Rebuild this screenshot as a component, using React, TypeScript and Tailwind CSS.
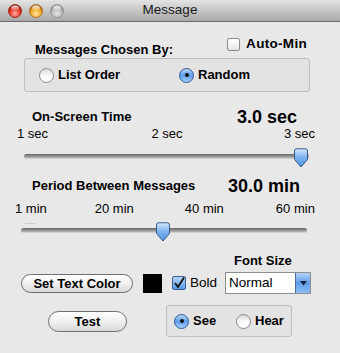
import React from "react";

const Light = ({ id, c1, c2, c3 }: { id: string; c1: string; c2: string; c3: string }) => (
  <svg width="14" height="14" viewBox="0 0 14 14">
    <defs>
      <radialGradient id={id} cx="50%" cy="70%" r="60%">
        <stop offset="0%" stopColor={c1} />
        <stop offset="70%" stopColor={c2} />
        <stop offset="100%" stopColor={c3} />
      </radialGradient>
      <linearGradient id={id + "g"} x1="0" y1="0" x2="0" y2="1">
        <stop offset="0%" stopColor="#fff" stopOpacity="0.9" />
        <stop offset="100%" stopColor="#fff" stopOpacity="0" />
      </linearGradient>
    </defs>
    <circle cx="7" cy="7" r="6.5" fill={`url(#${id})`} stroke={c3} strokeWidth="0.8" />
    <ellipse cx="7" cy="4.2" rx="4" ry="2.6" fill={`url(#${id + "g"})`} />
  </svg>
);

const Radio = ({ on }: { on?: boolean }) =>
  on ? (
    <span className="w-[15px] h-[15px] rounded-full border border-[#2c5a9a] bg-gradient-to-b from-[#b9d6f7] via-[#5d9ee8] to-[#a6d0fb] flex items-center justify-center shrink-0">
      <span className="w-[4px] h-[4px] rounded-full bg-[#111]" />
    </span>
  ) : (
    <span className="w-[15px] h-[15px] rounded-full border border-[#8a8a8a] bg-gradient-to-b from-[#d9d9d9] via-[#fafafa] to-[#ffffff] shrink-0" />
  );

const Thumb = () => (
  <svg width="16" height="20" viewBox="0 0 16 20">
    <defs>
      <linearGradient id="th" x1="0" y1="0" x2="0" y2="1">
        <stop offset="0%" stopColor="#d7e8fc" />
        <stop offset="45%" stopColor="#7fb4f0" />
        <stop offset="100%" stopColor="#4f93e3" />
      </linearGradient>
    </defs>
    <path d="M1.5 3 Q1.5 0.8 3.5 0.8 H12.5 Q14.5 0.8 14.5 3 V11.5 L8 19 L1.5 11.5 Z" fill="url(#th)" stroke="#38598a" strokeWidth="1" />
  </svg>
);

const Slider = ({ left, x0, x1 }: { left: number; x0: number; x1: number }) => (
  <div className="relative h-[20px]" style={{ marginLeft: x0, width: x1 - x0 }}>
    <div className="absolute left-0 right-0 top-[6px] h-[5px] rounded-full bg-gradient-to-b from-[#666] to-[#b8b8b8] border-b border-[#d0d0d0]" />
    <div className="absolute top-0" style={{ left }}>
      <Thumb />
    </div>
  </div>
);

export default function App() {
  return (
    <div className="w-[340px] h-[353px] bg-[#e8e8e8] font-['Liberation_Sans',Arial,sans-serif] text-black overflow-hidden">
      {/* title bar */}
      <div className="relative h-[22px] bg-gradient-to-b from-[#e4e4e4] to-[#a9a9a9] border-b border-[#6b6b6b] flex items-center justify-center">
        <div className="absolute left-[8px] top-[4px] flex gap-[7px]">
          <Light id="r" c1="#ffb0a8" c2="#e5301f" c3="#9a1a10" />
          <Light id="o" c1="#ffe9a0" c2="#f0a420" c3="#a8661a" />
          <Light id="g" c1="#e6e6e6" c2="#b8b8b8" c3="#8c8c8c" />
        </div>
        <span className="text-[13.5px] text-[#1a1a1a]">Message</span>
      </div>

      {/* messages chosen by */}
      <div className="mt-[14px] h-[22px] flex justify-between">
        <span className="mt-[6px] ml-[35px] text-[13px] leading-[16px] font-bold">Messages Chosen By:</span>
        <label className="mt-[1px] mr-[33px] h-[14px] flex items-center gap-[6px]">
          <span className="w-[13px] h-[13px] rounded-[2px] border border-[#8c8c8c] bg-gradient-to-b from-[#fff] to-[#e6e6e6]" />
          <span className="text-[13.5px] font-bold tracking-[0.3px]">Auto-Min</span>
        </label>
      </div>
      <div className="ml-[24px] w-[286px] h-[34px] rounded-[3px] border border-[#bdbdbd] bg-[#e3e3e3] flex items-center">
        <div className="ml-[14px] w-[140px] flex items-center gap-[4px]">
          <Radio />
          <span className="text-[13px] font-bold">List Order</span>
        </div>
        <div className="flex items-center gap-[4px]">
          <Radio on />
          <span className="text-[13px] font-bold">Random</span>
        </div>
      </div>

      {/* on-screen time */}
      <div className="mt-[16px] h-[18px] flex items-center">
        <span className="ml-[32px] w-[205px] text-[13px] font-bold">On-Screen Time</span>
        <span className="text-[18px] font-bold">3.0 sec</span>
      </div>
      <div className="h-[16px] flex items-center justify-between pl-[17px] pr-[25px] text-[13px]">
        <span>1 sec</span>
        <span className="ml-[2px]">2 sec</span>
        <span>3 sec</span>
      </div>
      <div className="mt-[6px]">
        <Slider x0={24} x1={309} left={269} />
      </div>

      {/* period */}
      <div className="mt-[9px] h-[18px] flex items-center">
        <span className="ml-[32px] w-[196px] text-[13px] font-bold">Period Between Messages</span>
        <span className="text-[18px] font-bold">30.0 min</span>
      </div>
      <div className="h-[16px] mt-[6px] flex items-center pl-[15px] text-[13px]">
        <span>1 min</span>
        <span className="ml-[48px]">20 min</span>
        <span className="ml-[51px]">40 min</span>
        <span className="ml-[52px]">60 min</span>
      </div>
      <div className="relative mt-[5px]">
        <div className="absolute left-[25px] top-[1px] w-[10px] h-[1px] bg-[#c8c8c8]" />
        <Slider x0={21} x1={307} left={134} />
      </div>

      {/* font size */}
      <div className="mt-[12px] h-[14px] flex items-center">
        <span className="ml-[234px] text-[13px] font-bold">Font Size</span>
      </div>
      <div className="mt-[4px] h-[22px] flex items-center">
        <button className="ml-[21px] w-[112px] h-[19px] rounded-full border border-[#6e6e6e] bg-gradient-to-b from-[#ffffff] via-[#f0f0f0] to-[#d8d8d8] text-[13px] font-bold leading-none">
          Set Text Color
        </button>
        <span className="ml-[10px] w-[19px] h-[19px] bg-black" />
        <span className="ml-[10px] w-[14px] h-[14px] rounded-[2px] border border-[#3a5f95] bg-gradient-to-b from-[#b7d4f6] to-[#5b9be6] flex items-center justify-center">
          <svg width="12" height="12" viewBox="0 0 12 12">
            <path d="M2 6 L5 10 L11 0.5" fill="none" stroke="#111" strokeWidth="1.8" />
          </svg>
        </span>
        <span className="ml-[4px] text-[13.5px]">Bold</span>
        <div className="ml-[8px] w-[86px] h-[22px] flex border border-[#8e8e8e] bg-white">
          <span className="flex-1 pl-[3px] text-[13.5px] leading-[20px]">Normal</span>
          <span className="w-[15px] h-full bg-gradient-to-b from-[#b6d3f6] via-[#5c9ce6] to-[#8cc0f5] border-l border-[#4a6d9e] flex items-center justify-center">
            <svg width="7" height="5" viewBox="0 0 7 5">
              <path d="M0 0 H7 L3.5 4.5 Z" fill="#12233f" />
            </svg>
          </span>
        </div>
      </div>

      {/* test / see hear */}
      <div className="mt-[11px] flex items-center">
        <button className="ml-[48px] w-[79px] h-[21px] rounded-full border border-[#6e6e6e] bg-gradient-to-b from-[#ffffff] via-[#f0f0f0] to-[#d8d8d8] text-[13px] font-bold leading-none">
          Test
        </button>
        <div className="ml-[39px] w-[126px] h-[32px] rounded-[3px] border border-[#bdbdbd] bg-[#e3e3e3] flex items-center">
          <div className="ml-[7px] w-[62px] flex items-center gap-[4px]">
            <Radio on />
            <span className="text-[13px] font-bold">See</span>
          </div>
          <div className="flex items-center gap-[4px]">
            <Radio />
            <span className="text-[13px] font-bold">Hear</span>
          </div>
        </div>
      </div>
    </div>
  );
}
